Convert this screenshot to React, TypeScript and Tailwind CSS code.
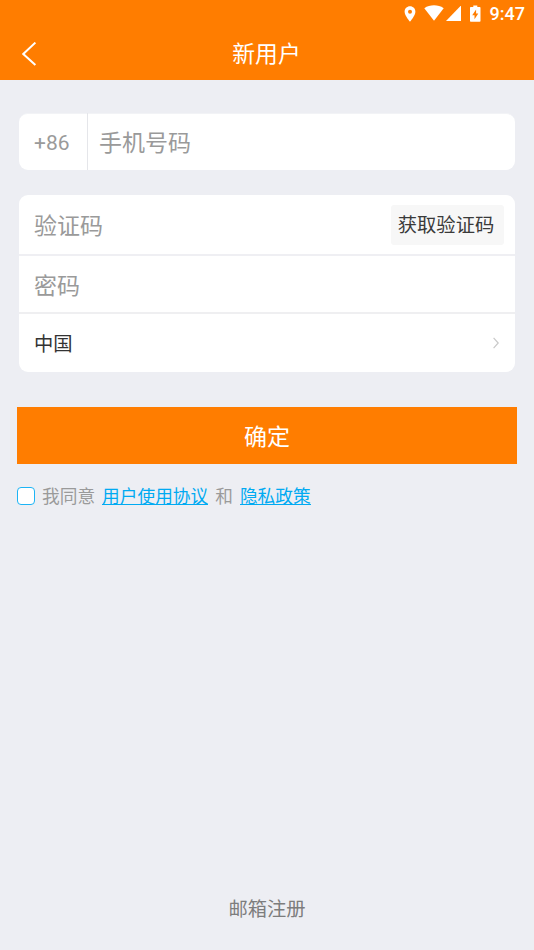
import React from "react"

const StatusBar = (): JSX.Element => {
  return (
    <div className="flex h-[27px] items-center justify-end pr-[9px] text-white">
      <svg className="mr-2 h-4 w-3" viewBox="0 0 12 16" fill="currentColor">
        <path
          fillRule="evenodd"
          d="M6 .3C2.9.3.6 2.6.6 5.7.6 9.6 6 15.6 6 15.6s5.4-6 5.4-9.9C11.4 2.6 9.1.3 6 .3Zm0 3.400a2 2 0 1 1 0 4 2 2 0 0 1 0-4Z"
        />
      </svg>
      <svg className="mr-[2px] mb-px h-4 w-5" viewBox="0 0 20 16" fill="currentColor">
        <path d="M.3 3.200C6-.6 14-.6 19.700 3.200L10 15.800Z" />
      </svg>
      <svg className="mr-[9px] mb-px h-4 w-[15.500px]" viewBox="0 0 15.5 16" fill="currentColor">
        <path d="M15.500 0v16H0Z" />
      </svg>
      <svg className="mr-[9px] mb-px h-[17px] w-[10.500px]" viewBox="0 0 10.5 17" fill="currentColor">
        <path
          fillRule="evenodd"
          d="M3.300.4h4v1.500h2.400q.8 0 .8.800V16q0 .8-.8.800H.8Q0 16.800 0 16V2.700q0-.8.8-.8h2.500ZM6.100 4.500 2.200 10.200h2.300v4l3.800-5.700H6.100Z"
        />
      </svg>
      <span className="text-[18px] leading-none font-medium">9:47</span>
    </div>
  )
}

const Header = (): JSX.Element => {
  return (
    <header className="h-20 bg-[#ff7d00]">
      <StatusBar />
      <div className="grid h-[53px] grid-cols-[80px_1fr_80px] items-center text-white">
        <button className="ml-[22px] w-fit" aria-label="返回">
          <svg className="h-6 w-[15px]" viewBox="0 0 15 24" fill="none" stroke="currentColor" strokeWidth="2">
            <path d="M13.400.6 1.300 12l12.100 11.100" />
          </svg>
        </button>
        <h1 className="pt-[4px] pr-px text-center text-[22.800px] leading-none">新用户</h1>
      </div>
    </header>
  )
}

const PhoneField = (): JSX.Element => {
  return (
    <div className="mx-[19px] mt-[33px] flex h-[57px] items-center rounded-[9px] border-t border-[#f2f3f6] bg-white text-[23px] text-[#9a9a9a]">
      <div className="-mt-px flex h-[57px] w-[69px] items-center border-r-[1.500px] border-[#e5e6ea] pt-[5px] pl-[15px] text-[21px]">
        +86
      </div>
      <span className="ml-[11px] pt-[5px]">手机号码</span>
    </div>
  )
}

const AccountFields = (): JSX.Element => {
  return (
    <div className="mx-[19px] mt-[25px] h-[177px] rounded-[9px] bg-white text-[23px] text-[#9a9a9a]">
      <div className="flex h-[61px] items-center justify-between border-b-2 border-[#efeff3] pr-[11px] pl-[15px]">
        <span className="pt-[5px]">验证码</span>
        <button className="h-10 w-[113px] rounded-[3px] bg-[#f7f7f7] pt-1 pr-[3px] text-[19.300px] text-[#3a3a3a]">
          获取验证码
        </button>
      </div>
      <div className="flex h-[58px] items-center border-b-2 border-[#efeff1] pl-[15px]">
        <span className="pt-[7px]">密码</span>
      </div>
      <div className="flex h-[58px] items-center justify-between pr-4 pl-[15px] text-[19.300px] text-[#333]">
        <span className="pt-[5px]">中国</span>
        <svg className="h-3 w-[6px]" viewBox="0 0 6 12" fill="none" stroke="#c9c9c9" strokeWidth="1.2">
          <path d="M.6.8 5.200 6 .6 11.200" />
        </svg>
      </div>
    </div>
  )
}

const Agreement = (): JSX.Element => {
  return (
    <div className="mx-[17px] mt-[18px] flex h-[27px] items-center pt-1 text-[17.700px] text-[#9a9a9a]">
      <button
        className="-mt-[3px] mr-[7px] size-[18px] rounded-[4px] border-[1.500px] border-[#1db4f5] bg-white"
        role="checkbox"
        aria-checked="false"
        aria-label="我同意"
      />
      <span>我同意</span>
      <a className="ml-[7px] border-b border-[#00aaf2] leading-[14px] text-[#00aaf2]">用户使用协议</a>
      <span className="mx-[7px]">和</span>
      <a className="border-b border-[#00aaf2] leading-[14px] text-[#00aaf2]">隐私政策</a>
    </div>
  )
}

const App = (): JSX.Element => {
  return (
    <main className="flex h-[950px] w-[534px] flex-col bg-[#edeef3] font-[Roboto,'Noto_Sans_CJK_SC',sans-serif]">
      <Header />
      <PhoneField />
      <AccountFields />
      <button className="mx-[17px] mt-[35px] h-[57px] bg-[#ff7d00] pt-[5px] text-[23px] text-white">确定</button>
      <Agreement />
      <button className="mx-auto mt-auto mb-[26px] text-[19.300px] leading-[29px] text-[#7d7d7d]">邮箱注册</button>
    </main>
  )
}

export default App
